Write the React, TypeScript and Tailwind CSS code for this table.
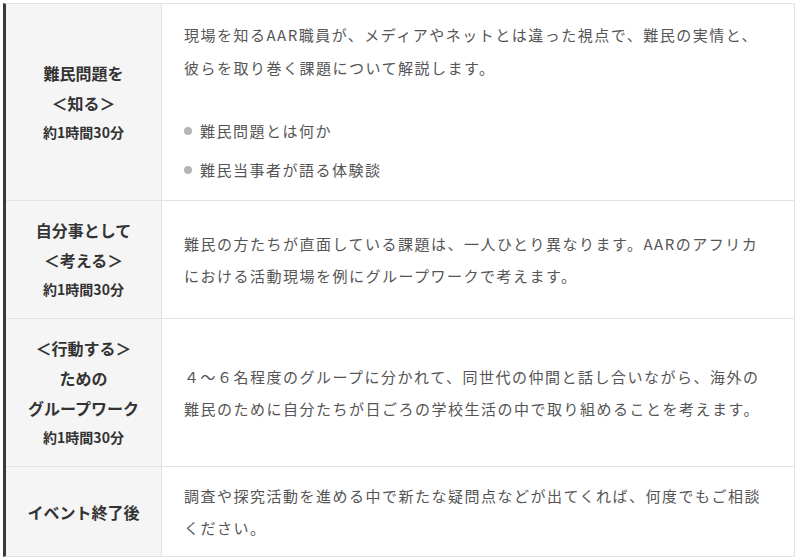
import React from "react";

type Row = {
  title: string[];
  time?: string;
  body: string[];
  items?: string[];
};

const rows: Row[] = [
  {
    title: ["難民問題を", "＜知る＞"],
    time: "約1時間30分",
    body: [
      "現場を知るAAR職員が、メディアやネットとは違った視点で、難民の実情と、",
      "彼らを取り巻く課題について解説します。",
    ],
    items: ["難民問題とは何か", "難民当事者が語る体験談"],
  },
  {
    title: ["自分事として", "＜考える＞"],
    time: "約1時間30分",
    body: [
      "難民の方たちが直面している課題は、一人ひとり異なります。AARのアフリカ",
      "における活動現場を例にグループワークで考えます。",
    ],
  },
  {
    title: ["＜行動する＞", "ための", "グループワーク"],
    time: "約1時間30分",
    body: [
      "４～６名程度のグループに分かれて、同世代の仲間と話し合いながら、海外の",
      "難民のために自分たちが日ごろの学校生活の中で取り組めることを考えます。",
    ],
  },
  {
    title: ["イベント終了後"],
    body: [
      "調査や探究活動を進める中で新たな疑問点などが出てくれば、何度でもご相談",
      "ください。",
    ],
  },
];

export default function App() {
  return (
    <div
      className="w-[800px] h-[560px] bg-white pt-[3px] pl-[3px]"
      style={{ fontFamily: '"Noto Sans CJK JP", "Noto Sans", sans-serif' }}
    >
      <div className="w-[792px] border-t border-r border-b border-[#e3e3e3] border-l-[3px] border-l-[#3a3a3a]">
        {rows.map((row, i) => (
          <div
            key={i}
            className={"flex " + (i > 0 ? "border-t border-[#e3e3e3]" : "")}
          >
            {/* label column */}
            <div className="w-[156px] shrink-0 bg-[#f5f5f5] border-r border-[#e3e3e3] py-[14px] flex flex-col items-center justify-center text-center text-[#333] font-bold">
              {row.title.map((t, j) => (
                <p key={j} className="text-[16px] leading-[30px]">
                  {t}
                </p>
              ))}
              {row.time && (
                <p className="text-[14px] leading-[29px]">{row.time}</p>
              )}
            </div>

            {/* detail column */}
            <div
              className={
                "flex-1 pl-[22px] pr-[10px] flex flex-col justify-center text-[15px] text-[#555] tracking-[0.1em] whitespace-nowrap " +
                (row.items ? "py-[14px]" : "pt-[13px] pb-[12px]")
              }
            >
              <p className={row.items ? "leading-[33px]" : "leading-[32px]"}>
                {row.body.map((b, j) => (
                  <React.Fragment key={j}>
                    {b}
                    {j < row.body.length - 1 && <br />}
                  </React.Fragment>
                ))}
              </p>
              {row.items && (
                <ul className="mt-[30px] flex flex-col gap-[6px]">
                  {row.items.map((it, j) => (
                    <li key={j} className="flex items-center gap-[8px] leading-[33px]">
                      <span className="w-[8px] h-[8px] rounded-full bg-[#b5b5b5] shrink-0" />
                      {it}
                    </li>
                  ))}
                </ul>
              )}
            </div>
          </div>
        ))}
      </div>
    </div>
  );
}
